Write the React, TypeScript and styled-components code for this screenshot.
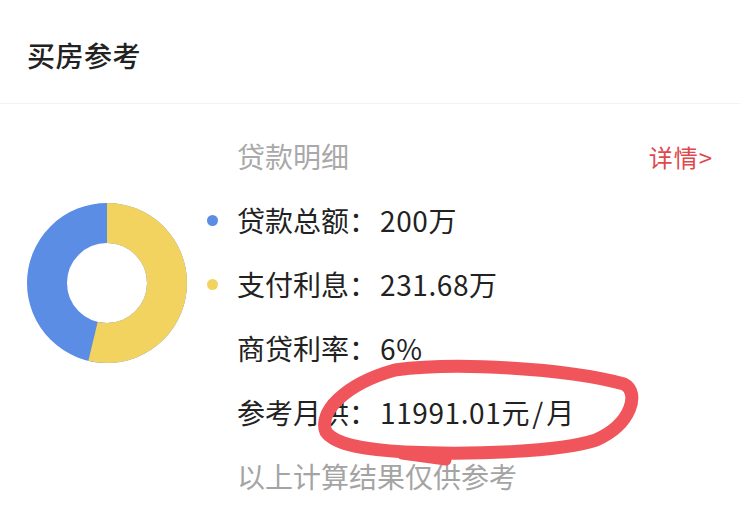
import React from "react";
import styled, { createGlobalStyle } from "styled-components";

const Global = createGlobalStyle`
  html, body { margin: 0; padding: 0; background: #ffffff; }
  body { font-family: "Noto Sans CJK SC", "Noto Sans", sans-serif; color: #222; }
`;

const Page = styled.div`
  position: relative;
  width: 740px;
  height: 515px;
  overflow: hidden;
  background: #fff;
`;

const Header = styled.div`
  height: 104px;
  display: flex;
  align-items: center;
  padding-left: 27px;
  padding-top: 6px;
  border-bottom: 1px solid #f3f3f3;
  box-sizing: border-box;
`;

const Title = styled.h1`
  margin: 0;
  font-size: 28px;
  font-weight: 500;
  color: #222;
  letter-spacing: 0.5px;
`;

const Body = styled.div`
  padding-top: 20px;
`;

const Top = styled.div`
  display: flex;
  align-items: center;
`;

const ChartCol = styled.div`
  width: 202px;
  padding-left: 27px;
  box-sizing: border-box;
  display: flex;
  align-items: center;
  margin-top: -2px;
`;

const List = styled.div`
  flex: 1;
  display: flex;
  flex-direction: column;
  padding-right: 27px;
`;

const Row = styled.div`
  height: 64px;
  display: flex;
  align-items: center;
`;

const Dot = styled.span<{ $color?: string }>`
  width: 11px;
  height: 11px;
  border-radius: 50%;
  background: ${(p) => p.$color || "transparent"};
  margin-left: 5px;
  margin-right: 19px;
  flex: none;
`;

const Label = styled.span<{ $muted?: boolean }>`
  font-size: 28px;
  color: ${(p) => (p.$muted ? "#a9a9a9" : "#222")};
  flex: 1;
  white-space: nowrap;
`;

const Value = styled.span`
  font-size: 28px;
  color: #222;
  margin-left: 3px;
  letter-spacing: 0.6px;
`;

const Link = styled.span`
  font-size: 24px;
  color: #e0484d;
  letter-spacing: 1px;
`;

const Note = styled.div`
  height: 64px;
  display: flex;
  align-items: center;
  padding-left: 237px;
  font-size: 28px;
  color: #a4a4a4;
`;

const Annotation = styled.svg`
  position: absolute;
  left: 0;
  top: 0;
  pointer-events: none;
`;

function Donut({ a, b }: { a: number; b: number }) {
  const r = 60;
  const c = 2 * Math.PI * r;
  const fracB = b / (a + b);
  return (
    <svg width="160" height="160" viewBox="0 0 160 160">
      <g transform="rotate(-90 80 80)">
        <circle cx="80" cy="80" r={r} fill="none" stroke="#5b8de4" strokeWidth="40" />
        <circle
          cx="80"
          cy="80"
          r={r}
          fill="none"
          stroke="#f3d35f"
          strokeWidth="40"
          strokeDasharray={`${c * fracB} ${c}`}
        />
      </g>
    </svg>
  );
}

export default function App() {
  return (
    <Page>
      <Global />
      <Header>
        <Title>买房参考</Title>
      </Header>
      <Body>
        <Top>
          <ChartCol>
            <Donut a={200} b={231.68} />
          </ChartCol>
          <List>
            <Row>
              <Dot />
              <Label $muted>贷款明细</Label>
              <Link>详情&gt;</Link>
            </Row>
            <Row>
              <Dot $color="#5b8de4" />
              <Label>
                贷款总额：<Value>200万</Value>
              </Label>
            </Row>
            <Row>
              <Dot $color="#f3d35f" />
              <Label>
                支付利息：<Value>231.68万</Value>
              </Label>
            </Row>
            <Row>
              <Dot />
              <Label>
                商贷利率：<Value>6%</Value>
              </Label>
            </Row>
            <Row>
              <Dot />
              <Label>
                参考月供：<Value>{"11991.01元\u200A/\u200A月"}</Value>
              </Label>
            </Row>
          </List>
        </Top>
        <Note>以上计算结果仅供参考</Note>
      </Body>
      <Annotation width="740" height="515" viewBox="0 0 740 515">
        <path
          d="M 395 370 C 455 362, 565 368, 624 384 C 640 392, 632 424, 596 440 C 560 452, 470 455, 405 452 C 370 450, 336 446, 326 432 C 318 412, 345 384, 395 370"
          fill="none"
          stroke="#f0555b"
          strokeWidth="13"
          strokeLinecap="round"
          strokeLinejoin="round"
        />
        <path d="M 402 454 L 446 460" fill="none" stroke="#f0555b" strokeWidth="11" strokeLinecap="round" />
      </Annotation>
    </Page>
  );
}
